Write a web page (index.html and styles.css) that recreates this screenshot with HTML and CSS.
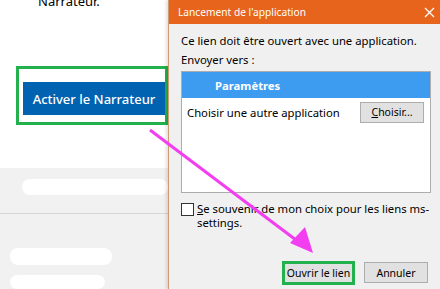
FILE: index.html
```html
<!DOCTYPE html>
<html>
<head>
    <link rel="stylesheet" href="styles.css">
</head>
<body>
    <div class="screen">
        <!-- Settings page behind the dialog -->
        <div class="page">
            <div class="page-top">
                <p class="page-text">Narrateur.</p>
                <div class="highlight big">
                    <button class="narrator-btn">Activer le Narrateur</button>
                </div>
            </div>
            <div class="page-bottom">
                <div class="scribble wide"></div>
                <div class="divider"></div>
                <div class="scribble short"></div>
                <div class="scribble shorter"></div>
            </div>
        </div>

        <!-- Launch dialog -->
        <div class="dialog">
            <div class="titlebar">
                <span class="title">Lancement de l'application</span>
                <svg class="close" width="11" height="11" viewBox="0 0 11 11">
                    <path d="M1 1 L10 10 M10 1 L1 10" stroke="#fff" stroke-width="1.3" fill="none"/>
                </svg>
            </div>
            <div class="dialog-body">
                <p class="line">Ce lien doit être ouvert avec une application.</p>
                <p class="line">Envoyer vers :</p>
                <div class="listbox">
                    <div class="list-item selected">Paramètres</div>
                    <div class="list-item other">
                        <span>Choisir une autre application</span>
                        <button class="win-btn"><u>C</u>hoisir...</button>
                    </div>
                </div>
                <div class="remember">
                    <span class="checkbox"></span>
                    <span><u>S</u>e souvenir de mon choix pour les liens ms-settings.</span>
                </div>
                <div class="actions">
                    <button class="win-btn open">Ouvrir le lien</button>
                    <button class="win-btn">Annuler</button>
                </div>
            </div>
        </div>

        <!-- Annotation arrow -->
        <svg class="arrow" width="440" height="289" viewBox="0 0 440 289">
            <line x1="150" y1="130" x2="300" y2="243" stroke="#f23ef0" stroke-width="3"/>
            <polygon points="313,253 290,243 305,227" fill="#f23ef0"/>
        </svg>
    </div>
</body>
</html>
```

FILE: styles.css
```css
body {
    margin: 0;
    font-family: "Noto Sans", sans-serif;
    color: #000;
}

.screen {
    position: relative;
    display: flex;
    width: 440px;
    height: 289px;
    overflow: hidden;
    background: #fff;
}

.page {
    width: 168px;
    display: flex;
    flex-direction: column;
}

.page-top {
    height: 172px;
    background: #fff;
}

.page-text {
    margin: -7px 0 0 38px;
    font-size: 13px;
    line-height: 17px;
}

.highlight {
    border: 3px solid #22b14c;
}

.highlight.big {
    margin: 56px 0 0 16px;
    padding: 13px 0 7px 4px;
    width: 142px;
}

.narrator-btn {
    display: block;
    width: 142px;
    height: 33px;
    border: none;
    background: #0063b1;
    color: #fff;
    font-family: "Noto Sans", sans-serif;
    font-size: 13px;
    font-weight: 500;
    padding: 0;
}

.page-bottom {
    flex: 1;
    background: #f1f1f1;
    display: flex;
    flex-direction: column;
}

.scribble {
    background: #fff;
    border-radius: 8px;
}

.scribble.wide {
    margin: 11px 0 0 22px;
    width: 146px;
    height: 16px;
}

.scribble.short {
    margin: 34px 0 0 10px;
    width: 102px;
    height: 17px;
}

.scribble.shorter {
    margin: 10px 0 0 10px;
    width: 95px;
    height: 14px;
}

.divider {
    margin-top: 18px;
    height: 1px;
    background: #d6d6d6;
}

.dialog {
    width: 271px;
    border-left: 1px solid #d29a70;
    background: #f0f0f0;
    box-shadow: -2px 0 3px rgba(0, 0, 0, 0.12);
    font-size: 11.3px;
}

.titlebar {
    height: 24px;
    background: #e6641b;
    color: #fff;
    display: flex;
    align-items: center;
    justify-content: space-between;
    padding: 0 5px 0 9px;
}

.title {
    font-size: 10.2px;
}

.dialog-body {
    padding: 9px 9px 0 12px;
}

.line {
    margin: 0 0 4px 0;
    line-height: 15px;
}

.listbox {
    height: 120px;
    border: 1px solid #adadad;
    background: #fff;
}

.list-item {
    display: flex;
    align-items: center;
    justify-content: space-between;
}

.list-item.selected {
    height: 26px;
    background: #3d9bf0;
    color: #fff;
    font-weight: bold;
    padding-left: 33px;
}

.list-item.other {
    height: 28px;
    padding: 0 6px 0 5px;
}

.win-btn {
    width: 64px;
    height: 21px;
    border: 1px solid #adadad;
    background: #e1e1e1;
    font-family: "Noto Sans", sans-serif;
    font-size: 10.5px;
    white-space: nowrap;
    padding: 0;
    color: #000;
}

.win-btn.open {
    width: 69px;
    height: 20px;
    outline: 3px solid #22b14c;
    outline-offset: -1px;
}

.remember {
    display: flex;
    gap: 3px;
    margin-top: 9px;
    line-height: 14px;
}

.checkbox {
    flex: none;
    width: 11px;
    height: 11px;
    border: 1px solid #333;
    background: #fff;
    margin-top: 1px;
}

.actions {
    display: flex;
    justify-content: flex-end;
    align-items: center;
    gap: 11px;
    margin: 32px 3px 0 0;
}

.arrow {
    position: absolute;
    left: 0;
    top: 0;
}
```
